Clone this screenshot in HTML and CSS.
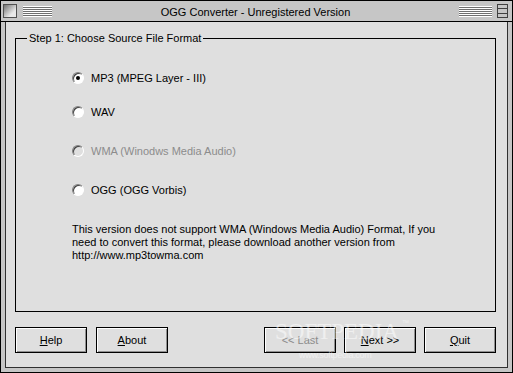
FILE: index.html
```html
<!DOCTYPE html>
<html lang="en">
<head>
    <meta charset="UTF-8">
    <meta name="viewport" content="width=device-width, initial-scale=1.0">
    <title>OGG Converter</title>
    <link rel="stylesheet" href="styles.css">
</head>
<body>
    <div class="window">
        <div class="titlebar">
            <span class="sys-box"></span>
            <span class="grip"></span>
            <span class="title">OGG Converter - Unregistered Version</span>
            <span class="grip grip-right"></span>
            <span class="max-box"><i></i><i></i></span>
        </div>
        <div class="frame">
            <div class="client">
                <div class="group">
                    <div class="group-label">Step 1: Choose Source File Format</div>
                    <div class="options">
                        <label class="option"><span class="radio checked"></span>MP3 (MPEG Layer - III)</label>
                        <label class="option"><span class="radio"></span>WAV</label>
                        <label class="option disabled"><span class="radio"></span>WMA (Winodws Media Audio)</label>
                        <label class="option"><span class="radio"></span>OGG (OGG Vorbis)</label>
                    </div>
                    <p class="note">This version does not support WMA (Windows Media Audio) Format, If you<br>need to convert this format, please download another version from<br>http://www.mp3towma.com</p>
                </div>

                <div class="buttons">
                    <div class="btn-group">
                        <button class="btn"><u>H</u>elp</button>
                        <button class="btn"><u>A</u>bout</button>
                    </div>
                    <div class="btn-group">
                        <button class="btn" disabled>&lt;&lt; Last</button>
                        <button class="btn"><u>N</u>ext &gt;&gt;</button>
                        <button class="btn"><u>Q</u>uit</button>
                    </div>
                </div>
            </div>
        </div>
        <div class="watermark">
            <span class="wm-big">SOFTPEDIA<sup>™</sup></span>
            <span class="wm-small">www.softpedia.com</span>
        </div>
    </div>
</body>
</html>
```

FILE: styles.css
```css
body {
    margin: 0;
    font-family: "Liberation Sans", Arial, sans-serif;
    font-size: 11px;
    color: #000;
}
.window {
    position: relative;
    width: 513px;
    height: 373px;
    box-sizing: border-box;
    border: 1px solid #000;
    background: #c6c6c6;
    display: flex;
    flex-direction: column;
}
.titlebar {
    height: 20px;
    flex: none;
    display: flex;
    align-items: center;
    padding: 0 4px 0 2px;
    border-bottom: 1px solid #000;
}
.sys-box {
    width: 12px;
    height: 12px;
    border: 1px solid #505050;
    background: linear-gradient(135deg, #707070, #e8e8e8 70%);
}
.grip {
    width: 29px;
    height: 11px;
    margin-left: 6px;
    background: repeating-linear-gradient(#fff 0 1px, #707070 1px 2px);
}
.title {
    flex: 1;
    text-align: center;
    padding-top: 1px;
}
.grip-right {
    width: 33px;
    margin: 0 5px 0 0;
}
.max-box {
    width: 9px;
    height: 12px;
    border: 1px solid #404040;
    background: #c6c6c6;
    display: flex;
    flex-direction: column;
    justify-content: space-evenly;
}
.max-box i {
    display: block;
    height: 1px;
    background: #404040;
}
.frame {
    flex: 1;
    padding: 0 4px 4px;
    display: flex;
}
.client {
    flex: 1;
    border: 1px solid #303030;
    border-top: none;
    background: #dfdfdf;
    padding: 16px 0 0 9px;
}
.group {
    width: 481px;
    height: 274px;
    box-sizing: border-box;
    border: 1px solid #000;
}
.group-label {
    width: fit-content;
    margin: -7px 0 0 11px;
    padding: 0 2px;
    line-height: 12px;
    background: #dfdfdf;
}
.options {
    display: flex;
    flex-direction: column;
    gap: 25px;
    margin: 27px 0 0 56px;
}
.option {
    display: flex;
    align-items: center;
    height: 14px;
    gap: 7px;
}
.option:first-child {
    margin-bottom: -5px;
}
.option.disabled {
    color: #8c8c8c;
}
.radio {
    position: relative;
    width: 10px;
    height: 10px;
    border-radius: 50%;
    border: 1px solid;
    border-color: #808080 #fff #fff #808080;
    box-shadow: inset 1px 1px #404040;
    background: #fff;
}
.disabled .radio {
    background: #dfdfdf;
}
.radio.checked::after {
    content: "";
    position: absolute;
    left: 3px;
    top: 3px;
    width: 4px;
    height: 4px;
    border-radius: 50%;
    background: #000;
}
.note {
    margin: 26px 0 0 56px;
    line-height: 13px;
}
.buttons {
    display: flex;
    justify-content: space-between;
    width: 481px;
    margin-top: 15px;
}
.btn-group {
    display: flex;
    gap: 8px;
}
.btn-group:first-child {
    gap: 9px;
}
.btn {
    width: 72px;
    height: 26px;
    padding: 0;
    font: inherit;
    color: #000;
    background: #dfdfdf;
    border: 1px solid #000;
    box-shadow: inset 1px 1px #fff, inset -1px -1px #909090;
}
.btn u {
    text-underline-offset: 1px;
}
.btn:disabled {
    color: #8c8c8c;
}
.watermark {
    position: absolute;
    left: 274px;
    top: 309px;
    display: flex;
    flex-direction: column;
    align-items: flex-start;
    color: rgba(255, 255, 255, 0.5);
    pointer-events: none;
}
.wm-big {
    font-family: "Liberation Serif", serif;
    font-size: 23px;
    line-height: 26px;
}
.wm-big sup {
    font-family: "Liberation Sans", sans-serif;
    font-size: 7px;
    vertical-align: 14px;
    margin-left: 3px;
}
.wm-small {
    font-size: 9px;
    margin: 5px 0 0 24px;
    letter-spacing: -0.3px;
}
```
